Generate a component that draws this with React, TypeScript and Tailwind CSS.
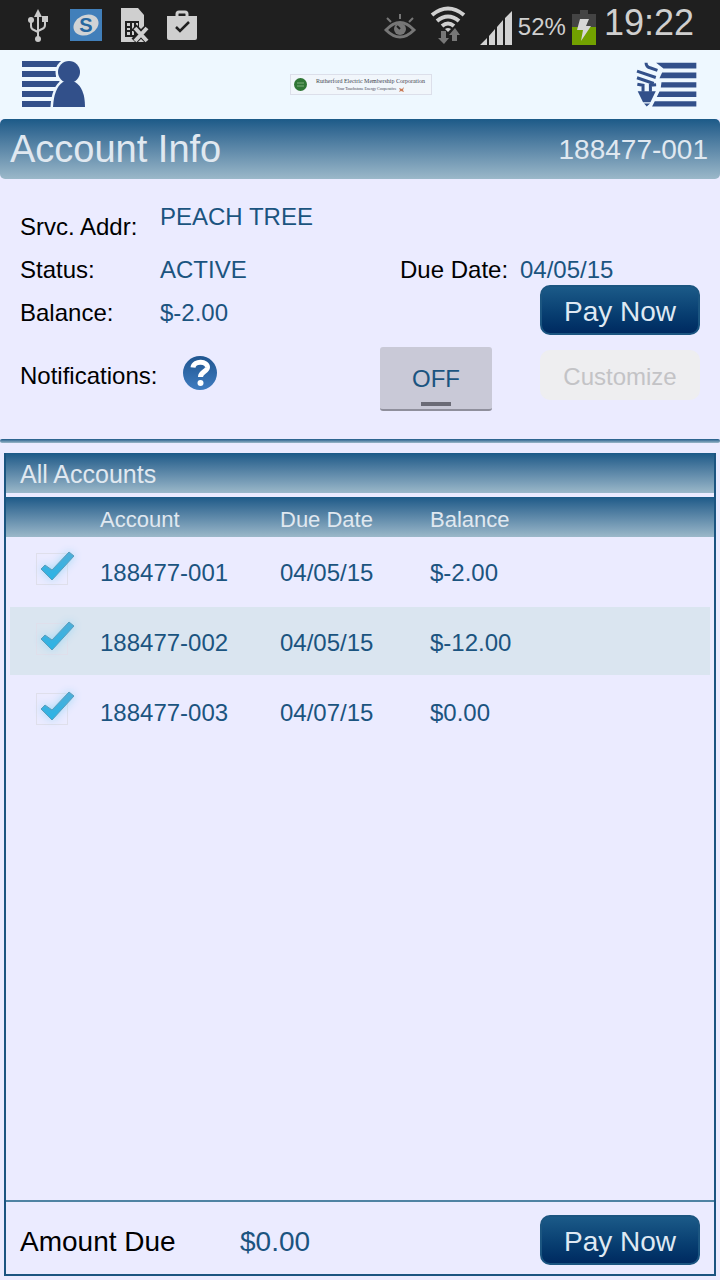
import React from 'react';

type Account = {
    id: string;
    dueDate: string;
    balance: string;
};

const accounts: Account[] = [
    { id: '188477-001', dueDate: '04/05/15', balance: '$-2.00' },
    { id: '188477-002', dueDate: '04/05/15', balance: '$-12.00' },
    { id: '188477-003', dueDate: '04/07/15', balance: '$0.00' },
];

function StatusBar() {
    return (
        <div className="flex h-[50px] items-center justify-between bg-[#1f1f1f] pl-[27px] pr-[26px] text-[#cfcfcf]">
            <div className="flex items-center gap-[18px]">
                {/* usb */}
                <svg className="h-[36px] w-[25px]" viewBox="0 0 25 36" fill="#c9c9c9">
                    <path d="M11 2l4 8h-8z" />
                    <path d="M11 8v24M4 14v5q0 3 3 4l4 2M18 14v4q0 3-3 4l-4 2" fill="none" stroke="#c9c9c9" strokeWidth="2" />
                    <circle cx="4" cy="13" r="3" />
                    <circle cx="11" cy="32" r="3" />
                    <path d="M15 9h6v6h-6z" />
                </svg>
                {/* S app */}
                <svg className="h-[32px] w-[32px]" viewBox="0 0 32 32">
                    <rect width="32" height="32" fill="#417fba" />
                    <ellipse cx="16" cy="16" rx="13" ry="10" fill="#d0d3d5" transform="rotate(-25 16 16)" />
                    <text x="16" y="23" textAnchor="middle" fontSize="20" fontWeight="bold" fill="#28679f">S</text>
                </svg>
                {/* sim missing */}
                <svg className="h-[36px] w-[29px]" viewBox="0 0 29 36">
                    <path d="M1 1h17l6 7v27h-23z" fill="#cfcfcf" />
                    <path d="M5 14h14v16h-14z" fill="#1f1f1f" />
                    <path d="M7 16h3v3h-3zM12 16h2v6h-2zM16 16h2v3h-2zM7 21h3v2h-3zM7 25h3v3h-3zM12 24h2v4h-2z" fill="#cfcfcf" />
                    <path d="M14 20l14 14M28 20l-14 14" stroke="#1f1f1f" strokeWidth="7" />
                    <path d="M15 21l12 13M27 21l-12 13" stroke="#cfcfcf" strokeWidth="4" />
                </svg>
                {/* briefcase */}
                <svg className="h-[32px] w-[30px]" viewBox="0 0 30 32">
                    <path d="M10 8V5q0-2 2-2h6q2 0 2 2v3" fill="none" stroke="#cfcfcf" strokeWidth="3" />
                    <path d="M0 7h30v22q0 2-2 2h-26q-2 0-2-2z" fill="#cfcfcf" />
                    <path d="M9 18l4 4 9-9" fill="none" stroke="#1f1f1f" strokeWidth="2.500" />
                </svg>
            </div>
            <div className="flex items-center gap-[6px]">
                {/* smart stay */}
                <svg className="h-[36px] w-[40px]" viewBox="0 0 40 36">
                    <path d="M2 23q14-15 28 0q-14 14-28 0z" fill="none" stroke="#777" strokeWidth="3" />
                    <circle cx="16" cy="22" r="6" fill="#777" />
                    <path d="M13 19l3 3" stroke="#1f1f1f" strokeWidth="2" />
                    <path d="M3 11l4 4M16 7v5M29 11l-4 4" stroke="#777" strokeWidth="2" />
                </svg>
                {/* wifi */}
                <svg className="h-[38px] w-[44px]" viewBox="0 0 44 38">
                    <path d="M2 9q16-13 32 0M7 15q11-9 22 0M12 20q6-5 12 0" fill="none" stroke="#d0d0d0" strokeWidth="4" />
                    <path d="M15 23q3-2 6 0l-3 3z" fill="#d0d0d0" />
                    <path d="M11 25h5v7h3l-5 6-6-6h3z" fill="#777" />
                    <path d="M22 35h5v-6h3l-5-7-6 7h3z" fill="#777" />
                </svg>
                {/* signal */}
                <svg className="mt-[5px] h-[34px] w-[32px]" viewBox="0 0 32 34" fill="#d2d2d2">
                    <path d="M0 34l7-7v7zM9 25l6-7v16h-6zM17 16l6-7v25h-6zM25 7l7-7v34h-7z" />
                </svg>
                <span className="mt-1 text-[24px] leading-[28px]">52%</span>
                {/* battery */}
                <svg className="mt-1 h-[35px] w-[24px]" viewBox="0 0 24 35">
                    <path d="M8 0h8v4h8v31h-24v-31h8z" fill="#444" />
                    <path d="M0 17h24v18h-24z" fill="#72a100" />
                    <path d="M8 9h9l-3 7h5l-10 15 2-11h-6z" fill="#d6d6d6" />
                </svg>
                <span className="pb-1 pl-0.5 text-[36px] leading-[40px]">19:22</span>
            </div>
        </div>
    );
}

function AppHeader() {
    return (
        <header className="flex h-[69px] items-center justify-between bg-[#eef8ff] pl-[22px] pr-[23px]">
            <button type="button" aria-label="Account menu">
                <svg className="h-[47px] w-[64px]" viewBox="0 0 64 47" fill="#32508a">
                    <path d="M0 0h40v6h-40zM0 10h34v6h-34zM0 20h40v6h-40zM0 30h34v6h-34zM0 40h30v6h-30z" />
                    <g stroke="#eef8ff" strokeWidth="5">
                        <circle cx="47" cy="11" r="11" />
                        <path d="M31 46q1-19 10-25h12q10 6 10 25z" />
                    </g>
                    <circle cx="47" cy="11" r="11" />
                    <path d="M31 46q1-19 10-25h12q10 6 10 25z" />
                </svg>
            </button>
            <div className="flex h-[21px] w-[142px] items-center gap-[3px] border border-[#dcdfea] bg-[#f1f6fb] pl-[3px]">
                <svg className="h-[13px] w-[13px] shrink-0" viewBox="0 0 13 13">
                    <circle cx="6.500" cy="6.500" r="6.500" fill="#2f7635" />
                    <path d="M3 5h7M3 8h7" stroke="#7eae7c" />
                </svg>
                <div className="flex flex-1 flex-col items-center font-['Liberation_Serif',serif] text-[#3f444f]">
                    <span className="whitespace-nowrap text-[6px] leading-[9px]">Rutherford Electric Membership Corporation</span>
                    <span className="flex items-center gap-[2px] whitespace-nowrap text-[4px] leading-[6px]">
                        Your Touchstone Energy Cooperative
                        <svg className="h-[5px] w-[6px]" viewBox="0 0 6 5">
                            <path d="M0 1l3 1 2-2-1 3 1 2-3-1-2 1 1-2z" fill="#c97b57" />
                        </svg>
                    </span>
                </div>
            </div>
            <button type="button" aria-label="Energy menu">
                <svg className="h-[45px] w-[61px]" viewBox="108 38 182 134" fill="#32508a">
                    <path d="M168 40h120v17h-98zM186 69h102v17h-110zM184 98h104v16h-106zM178 126h110v16h-118zM164 155h124v16h-132z" />
                    <path d="M138 40q0 13 14 16l20 7M111 65l56 19M111 85l50 17" fill="none" stroke="#32508a" strokeWidth="9" />
                    <path d="M112 104l17 3v20M168 106l-17 1v20" fill="none" stroke="#32508a" strokeWidth="9" />
                    <path d="M113 125h54l-16 33h-22zM132 162h18l-10 9z" />
                </svg>
            </button>
        </header>
    );
}

function PayNowButton() {
    return (
        <button
            type="button"
            className="h-[50px] w-[160px] shrink-0 rounded-[10px] border-2 border-[#1b5580] bg-linear-to-b from-[#1b5a88] to-[#002a60] pt-[3px] text-[28px] leading-[32px] text-[#dfe9f3]"
        >
            Pay Now
        </button>
    );
}

function AccountInfo() {
    const [isOn, setIsOn] = React.useState(false);

    return (
        <section>
            <div className="flex h-[60px] items-center justify-between rounded-[5px] bg-linear-to-b from-[#1b5a88] to-[#9bb8c9] pl-[10px] pr-3 text-[#e0e8f0]">
                <h1 className="text-[38px] leading-[44px]">Account Info</h1>
                <span className="pt-[2px] text-[28px] leading-[32px]">188477-001</span>
            </div>
            <div className="flex h-[260px] flex-col px-5 pt-[26px] text-[24px] leading-[24px] text-[#1b5480]">
                <div className="flex h-[34px]">
                    <span className="w-[140px] self-end whitespace-nowrap text-black">Srvc. Addr:</span>
                    <span>PEACH TREE</span>
                </div>
                <div className="mt-[15px] flex h-[31px] items-center">
                    <span className="w-[140px] text-black">Status:</span>
                    <span>ACTIVE</span>
                    <div className="ml-auto flex w-[300px]">
                        <span className="w-[120px] text-black">Due Date:</span>
                        <span>04/05/15</span>
                    </div>
                </div>
                <div className="flex items-center">
                    <span className="w-[140px] pt-[6px] text-black">Balance:</span>
                    <span className="flex-1 pt-[6px]">$-2.00</span>
                    <PayNowButton />
                </div>
                <div className="mt-3 flex items-start">
                    <span className="flex h-[58px] w-[162px] items-center text-black">Notifications:</span>
                    <button type="button" aria-label="Help" className="flex h-[52px] items-center">
                        <svg className="h-[36px] w-[36px]" viewBox="0 0 36 36">
                            <defs>
                                <linearGradient id="help" x1="0" y1="0" x2="0" y2="1">
                                    <stop offset="0" stopColor="#1f5590" />
                                    <stop offset="1" stopColor="#3f7cc0" />
                                </linearGradient>
                            </defs>
                            <circle cx="18" cy="18" r="17" fill="url(#help)" />
                            <path d="M11 12.500C12 5 26 6 25.500 12.500C25 17 18.500 16.500 18.500 22" fill="none" stroke="#fff" strokeWidth="5" />
                            <circle cx="18.500" cy="28" r="3" fill="#fff" />
                        </svg>
                    </button>
                    <button
                        type="button"
                        aria-pressed={isOn}
                        onClick={() => setIsOn(!isOn)}
                        className="ml-auto flex h-[64px] w-[112px] flex-col items-center justify-end rounded-[3px] border-b-2 border-[#8f8f9c] bg-[#c9c9d7] pb-[3px]"
                    >
                        <span className="pb-[11px]">{isOn ? 'ON' : 'OFF'}</span>
                        <span className="h-1 w-[30px] bg-[#6b6b76]" />
                    </button>
                    <button type="button" disabled className="ml-12 mt-[3px] h-[50px] w-[160px] rounded-[10px] bg-[#eeeef0] pt-[3px] text-[#c3c3c6]">
                        Customize
                    </button>
                </div>
            </div>
            <div className="h-[4px] rounded-[2px] bg-linear-to-b from-[#1b5a88] to-[#9bb8c9]" />
        </section>
    );
}

function AccountCheckbox({ id }: { id: string }) {
    return (
        <div className="relative ml-[26px] h-[32px] w-[32px]">
            <input
                type="checkbox"
                defaultChecked
                aria-label={id}
                className="peer block h-[32px] w-[32px] appearance-none border border-[#dfdfeb]"
            />
            <svg
                className="pointer-events-none absolute -top-[6px] left-0 hidden h-[36px] w-[44px] drop-shadow-[0_0_4px_#9fd8f5] peer-checked:block"
                viewBox="0 0 44 36"
            >
                <defs>
                    <linearGradient id="tick" x1="0" y1="0" x2="0" y2="1">
                        <stop offset="0" stopColor="#4eaed8" />
                        <stop offset="1" stopColor="#2ab4e6" />
                    </linearGradient>
                </defs>
                <path d="M5 22l4-4 7 5 17-18 5 4-22 24z" fill="url(#tick)" stroke="#5a9dbb" strokeWidth="1" strokeLinejoin="round" />
            </svg>
        </div>
    );
}

function AllAccounts() {
    return (
        <section className="mx-1 mb-1 mt-[10px] flex flex-1 flex-col border-2 border-t-0 border-[#1b5480]">
            <h2 className="h-[40px] bg-linear-to-b from-[#1b5a88] to-[#9bb8c9] pl-[14px] pt-[2px] text-[25px] leading-[38px] text-[#e0e8f0]">
                All Accounts
            </h2>
            <table className="mt-1 w-full table-fixed border-separate border-spacing-0 text-left text-[#1b5480]">
                <colgroup>
                    <col className="w-[94px]" />
                    <col className="w-[180px]" />
                    <col className="w-[150px]" />
                    <col />
                </colgroup>
                <thead>
                    <tr className="h-[40px] bg-linear-to-b from-[#1b5a88] to-[#9bb8c9] text-[22px] leading-[24px] text-[#e0e8f0]">
                        <th className="p-0" aria-label="Selected" />
                        <th className="p-0 pt-[6px] font-normal">Account</th>
                        <th className="p-0 pt-[6px] font-normal">Due Date</th>
                        <th className="p-0 pt-[6px] font-normal">Balance</th>
                    </tr>
                </thead>
                <tbody className="text-[24px] leading-[24px]">
                    {accounts.map((account) => (
                        <tr key={account.id} className="h-[70px] even:bg-[#dae5f0]">
                            <td className="border-b-2 border-l-4 border-[#ebebff] p-0 pb-1">
                                <AccountCheckbox id={account.id} />
                            </td>
                            <td className="border-b-2 border-[#ebebff] p-0 pt-1">{account.id}</td>
                            <td className="border-b-2 border-[#ebebff] p-0 pt-1">{account.dueDate}</td>
                            <td className="border-b-2 border-r-4 border-[#ebebff] p-0 pt-1">{account.balance}</td>
                        </tr>
                    ))}
                </tbody>
            </table>
            <div className="mt-auto flex h-[74px] items-center border-t-2 border-[#4f83a3] px-[14px] pt-1 text-[28px] leading-[32px]">
                <span className="w-[220px] pt-[3px] text-black">Amount Due</span>
                <span className="flex-1 pt-[3px] text-[#1b5480]">$0.00</span>
                <PayNowButton />
            </div>
        </section>
    );
}

export default function App() {
    return (
        <div className="flex min-h-screen flex-col bg-[#ebebff] font-['Liberation_Sans',Arial,sans-serif]">
            <StatusBar />
            <AppHeader />
            <AccountInfo />
            <AllAccounts />
        </div>
    );
}
